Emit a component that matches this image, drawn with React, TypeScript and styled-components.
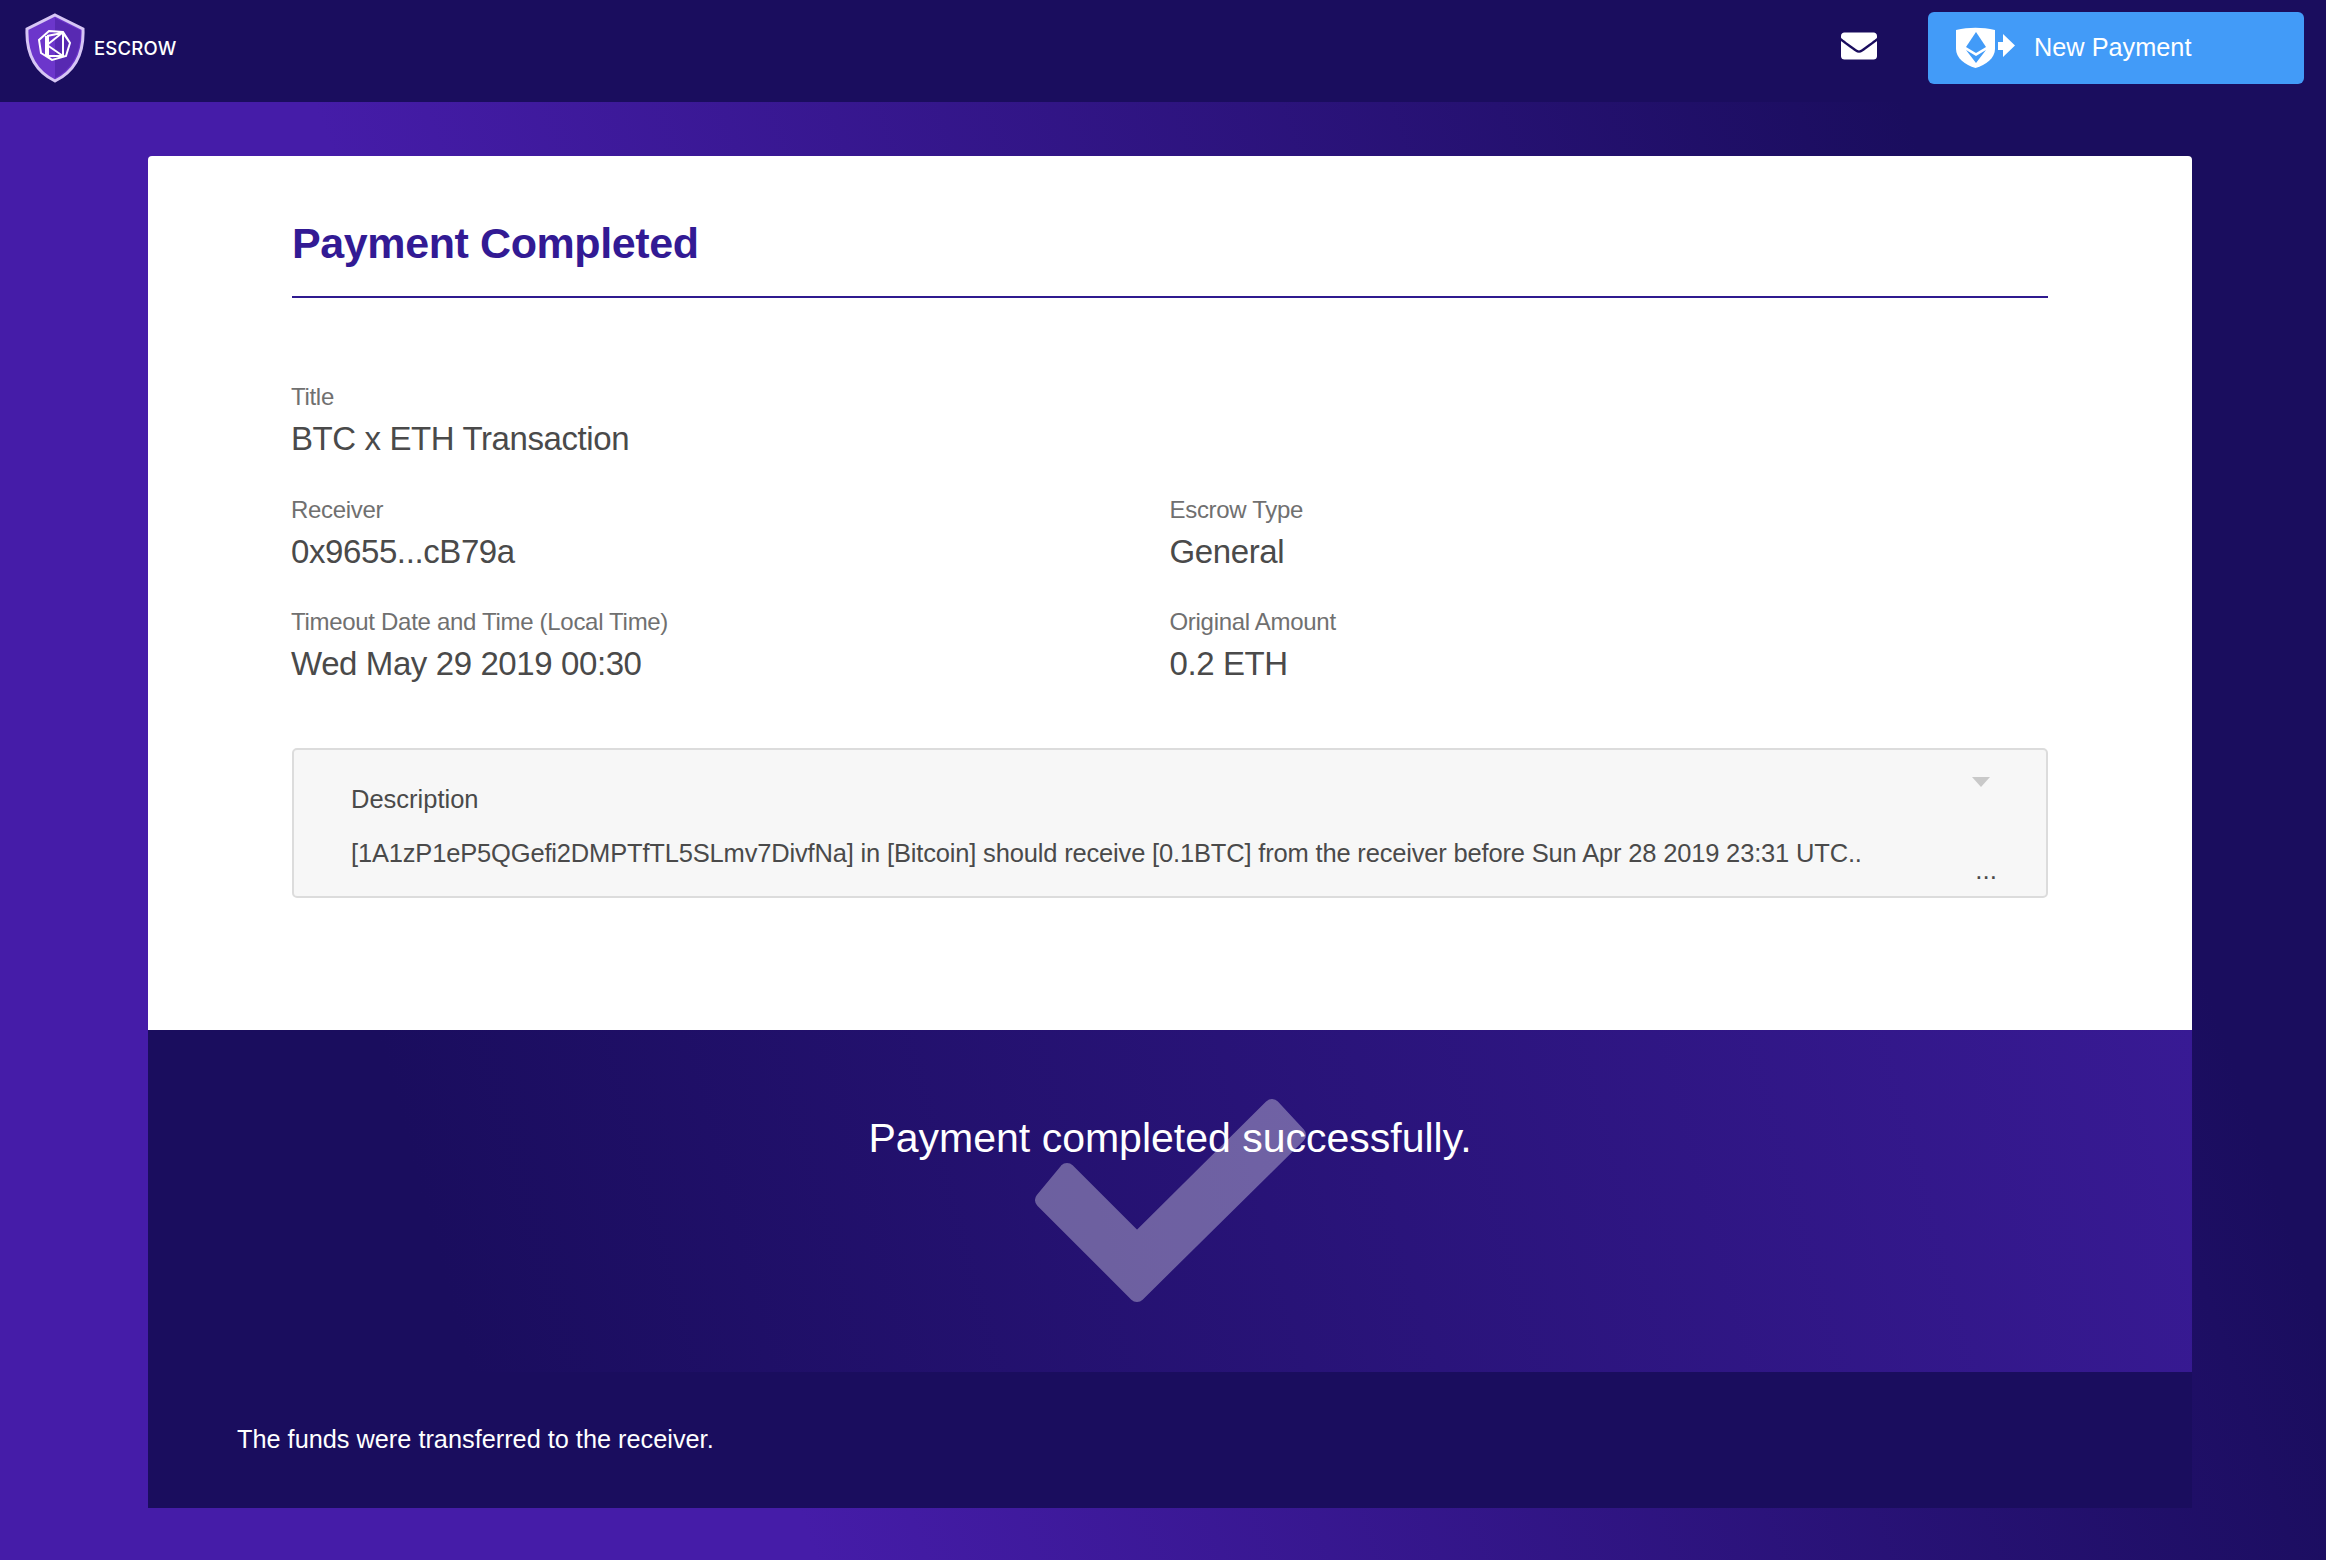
import styled, { createGlobalStyle } from 'styled-components'
import { FaEnvelope } from 'react-icons/fa'

const GlobalStyle = createGlobalStyle`
  html, body {
    margin: 0;
    padding: 0;
    background: #1a0d5e;
  }
  * {
    box-sizing: border-box;
  }
`

const Page = styled.div`
  width: 2326px;
  height: 1560px;
  overflow: hidden;
  font-family: 'Liberation Sans', Arial, sans-serif;
  background: linear-gradient(71deg, #451ca8 28.5%, #1a0d5e 84%);
`

const Header = styled.header`
  height: 102px;
  background: #1a0d5e;
  display: flex;
  align-items: center;
  justify-content: space-between;
  padding: 0 22px 6px 25px;
`

const Brand = styled.div`
  display: flex;
  align-items: center;
  gap: 9px;
`

const BrandName = styled.span`
  font-family: Inter, sans-serif;
  font-size: 18.5px;
  font-weight: 500;
  letter-spacing: 0.2px;
  color: #fff;
`

const HeaderActions = styled.div`
  display: flex;
  align-items: center;
  gap: 51px;
  color: #fff;
`

const MailIcon = styled(FaEnvelope)`
  margin-bottom: 4px;
`

const NewPaymentButton = styled.button`
  width: 376px;
  height: 72px;
  border: 0;
  border-radius: 6px;
  background: #429bf8;
  color: #fff;
  display: flex;
  align-items: center;
  padding: 0 0 0 28px;
  font-family: inherit;
  font-size: 25.3px;
`

const ButtonLabel = styled.span`
  margin: 0 0 2px 18px;
`

const Card = styled.main`
  width: 2044px;
  margin: 54px 0 0 148px;
`

const Details = styled.section`
  height: 874px;
  background: #fff;
  border-radius: 4px 4px 0 0;
  padding: 0 144px;
`

const Heading = styled.h1`
  margin: 0;
  height: 142px;
  padding-top: 59px;
  border-bottom: 2px solid #2f1a8f;
  color: #321a94;
  font-size: 43px;
  line-height: 56px;
  font-weight: 700;
  letter-spacing: -0.4px;
`

const FieldGrid = styled.div`
  display: grid;
  grid-template-columns: 878.5px 1fr;
  grid-auto-rows: 112.5px;
  margin: 83px 0 0 -1px;
`

const Field = styled.div<{ $wide?: boolean }>`
  grid-column: ${(p) => (p.$wide ? '1 / -1' : 'auto')};
`

const FieldLabel = styled.div`
  color: #707070;
  font-size: 24px;
  line-height: 32px;
  letter-spacing: -0.3px;
`

const FieldValue = styled.div`
  color: #4a4a4a;
  font-size: 33px;
  line-height: 42px;
  letter-spacing: -0.4px;
  margin-top: 5px;
`

const DescriptionBox = styled.div`
  position: relative;
  height: 150px;
  margin-top: 29px;
  padding: 33px 57px 0;
  background: #f7f7f7;
  border: 2px solid #dcdcdc;
  border-radius: 5px;
  color: #4a4a4a;
  font-size: 25.5px;
`

const DescriptionTitle = styled.div`
  line-height: 32px;
`

const DescriptionText = styled.div`
  margin-top: 22px;
  line-height: 32px;
  letter-spacing: -0.17px;
  white-space: nowrap;
`

const Caret = styled.span`
  position: absolute;
  top: 27px;
  right: 56px;
  width: 0;
  height: 0;
  border-left: 9px solid transparent;
  border-right: 9px solid transparent;
  border-top: 10px solid #c9c9c9;
`

const More = styled.span`
  position: absolute;
  right: 49px;
  bottom: 10px;
  font-size: 26px;
  line-height: 32px;
`

const SuccessPanel = styled.section`
  position: relative;
  height: 342px;
  padding-top: 84px;
  text-align: center;
  color: #fff;
  font-size: 41px;
  line-height: 48px;
  background: linear-gradient(75deg, #1a0d5e 15%, #381a94 100%);
`

const CheckMark = styled.svg`
  position: absolute;
  left: 50%;
  top: 60px;
  transform: translateX(-50%);
  opacity: 0.33;
`

const SuccessText = styled.div`
  position: relative;
`

const FootNote = styled.footer`
  height: 136px;
  background: #1a0d5e;
  color: #fff;
  padding: 51px 0 0 89px;
  font-size: 25.3px;
  line-height: 32px;
`

function ShieldLogo() {
  return (
    <svg width="60" height="70" viewBox="0 0 60 70">
      <path d="M30 2 L58 16 C59 40 50 58 30 68 C10 58 1 40 2 16 Z" fill="#6c36cb" stroke="#d7c6f5" strokeWidth="3" />
      <path d="M30 5 L55.5 17.5 C56 40 47 56 30 65 Z" fill="#5829b2" />
      <path
        d="M24 18 L38 19 L45 30 L41 43 L27 47 L16 40 L14 27 Z M22 23 L37 20 M22 32 L37 20 M22 32 L38 43 M38 43 L38 20 M38 20 L45 30 M22 43 L38 43 M22 43 L27 47"
        fill="none"
        stroke="#fff"
        strokeWidth="2"
      />
      <path d="M22 23 V43" stroke="#fff" strokeWidth="4" />
    </svg>
  )
}

function EthShieldIcon() {
  return (
    <svg width="60" height="42" viewBox="0 0 60 42">
      <path d="M0 3 C13 0 26 0 39 3 V22 C39 31 30 38 19.5 41 C9 38 0 31 0 22 Z" fill="#fff" />
      <path d="M20 5 L30 20 L20 26 L10 20 Z" fill="#429bf8" />
      <path d="M10 23 L20 29 L30 23 L20 36 Z" fill="#429bf8" />
      <path d="M42 15 H47 V7 L59 18.5 L47 30 V23 H42 Z" fill="#fff" />
    </svg>
  )
}

export default function App() {
  return (
    <Page>
      <GlobalStyle />
      <Header>
        <Brand>
          <ShieldLogo />
          <BrandName>ESCROW</BrandName>
        </Brand>
        <HeaderActions>
          <MailIcon size={36} />
          <NewPaymentButton>
            <EthShieldIcon />
            <ButtonLabel>New Payment</ButtonLabel>
          </NewPaymentButton>
        </HeaderActions>
      </Header>
      <Card>
        <Details>
          <Heading>Payment Completed</Heading>
          <FieldGrid>
            <Field $wide>
              <FieldLabel>Title</FieldLabel>
              <FieldValue>BTC x ETH Transaction</FieldValue>
            </Field>
            <Field>
              <FieldLabel>Receiver</FieldLabel>
              <FieldValue>0x9655...cB79a</FieldValue>
            </Field>
            <Field>
              <FieldLabel>Escrow Type</FieldLabel>
              <FieldValue>General</FieldValue>
            </Field>
            <Field>
              <FieldLabel>Timeout Date and Time (Local Time)</FieldLabel>
              <FieldValue>Wed May 29 2019 00:30</FieldValue>
            </Field>
            <Field>
              <FieldLabel>Original Amount</FieldLabel>
              <FieldValue>0.2 ETH</FieldValue>
            </Field>
          </FieldGrid>
          <DescriptionBox>
            <DescriptionTitle>Description</DescriptionTitle>
            <DescriptionText>
              [1A1zP1eP5QGefi2DMPTfTL5SLmv7DivfNa] in [Bitcoin] should receive [0.1BTC] from the receiver before Sun Apr 28 2019 23:31 UTC..
            </DescriptionText>
            <Caret />
            <More>...</More>
          </DescriptionBox>
        </Details>
        <SuccessPanel>
          <CheckMark width="290" height="220" viewBox="0 0 290 220">
            <path
              d="M112 151 L42 81 L18 110 L112 204 L273 45 L247 17 Z"
              fill="#fff"
              stroke="#fff"
              strokeWidth="16"
              strokeLinejoin="round"
            />
          </CheckMark>
          <SuccessText>Payment completed successfully.</SuccessText>
        </SuccessPanel>
        <FootNote>The funds were transferred to the receiver.</FootNote>
      </Card>
    </Page>
  )
}
